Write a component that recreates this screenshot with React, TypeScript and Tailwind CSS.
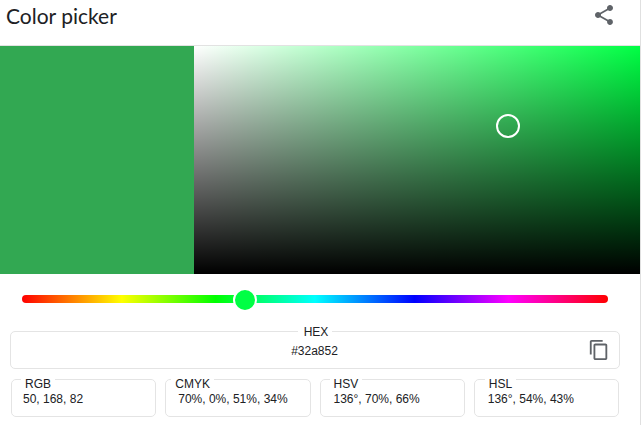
import React from "react";

const Field = ({ label, value, labelClass, valueClass }: { label: string; value: string; labelClass: string; valueClass: string }) => (
  <fieldset className="h-[45px] flex-1 min-w-0 rounded-[5px] border border-[#e4e4e4]">
    <legend className={`h-[14px] text-[12px] leading-[14px] px-[4px] text-[#202124] ${labelClass}`}>
      <span className="relative top-[5px]">{label}</span>
    </legend>
    <div className={`text-[12px] leading-[14px] text-[#202124] mt-[6px] ${valueClass}`}>{value}</div>
  </fieldset>
);

export default function App() {
  return (
    <div className="w-[641px] h-[425px] bg-white overflow-hidden border-r border-[#e0e0e0]" style={{ fontFamily: '"Liberation Sans", Arial, sans-serif' }}>
      <header className="h-[46px] flex items-start justify-between border-b border-[#e2e2e2] pl-[6px] pr-[24px]">
        <h1 className="text-[21px] leading-[32px] text-[#202124]" style={{ fontFamily: 'Lato, sans-serif' }}>Color picker</h1>
        <svg width="24" height="24" viewBox="0 0 24 24" className="mt-[3px]" fill="#5f6368">
          <path d="M18 16.08c-.76 0-1.44.3-1.96.77L8.91 12.7c.05-.23.09-.46.09-.7s-.04-.47-.09-.7l7.05-4.11c.54.5 1.25.81 2.04.81 1.66 0 3-1.34 3-3s-1.34-3-3-3-3 1.34-3 3c0 .24.04.47.09.7L8.04 9.81C7.5 9.31 6.79 9 6 9c-1.66 0-3 1.34-3 3s1.34 3 3 3c.79 0 1.5-.31 2.04-.81l7.12 4.16c-.05.21-.08.43-.08.65 0 1.61 1.31 2.92 2.92 2.92s2.92-1.31 2.92-2.92-1.31-2.92-2.92-2.92z" />
        </svg>
      </header>

      <section className="flex h-[228px]">
        <div className="w-[194px] bg-[#32a852]" />
        <div className="relative flex-1 bg-[#00ff44]">
          <div className="absolute inset-0 bg-gradient-to-r from-white to-transparent" />
          <div className="absolute inset-0 bg-gradient-to-b from-transparent to-black" />
          <div className="absolute left-[302px] top-[68px] w-[24px] h-[24px] rounded-full border-2 border-white" />
        </div>
      </section>

      <div className="relative mt-[21px] ml-[22px] w-[586px] h-[8px] rounded-full bg-[linear-gradient(to_right,#f00_0%,#ff0_17%,#0f0_33%,#0ff_50%,#00f_67%,#f0f_83%,#f00_100%)]">
        <div className="absolute left-[211px] top-[-7px] w-[24px] h-[24px] rounded-full bg-[#00ff44] border-2 border-white" />
      </div>

      <fieldset className="relative mt-[21px] ml-[10px] w-[610px] h-[45px] rounded-[5px] border border-[#e4e4e4] text-center">
        <legend className="mx-auto h-[14px] text-[12px] leading-[14px] px-[5px] text-[#202124]">
          <span className="relative top-[1px] left-[1px]">HEX</span>
        </legend>
        <div className="text-[12px] leading-[14px] text-[#202124] mt-[6px] pr-[1px]">#32a852</div>
        <svg width="22" height="22" viewBox="0 0 24 24" fill="#5f6368" className="absolute right-[9px] top-[1px]">
          <path d="M16 1H4c-1.1 0-2 .9-2 2v14h2V3h12V1zm3 4H8c-1.1 0-2 .9-2 2v14c0 1.1.9 2 2 2h11c1.1 0 2-.9 2-2V7c0-1.1-.9-2-2-2zm0 16H8V7h11v14z" />
        </svg>
      </fieldset>

      <div className="mt-[3px] ml-[11px] w-[608px] flex gap-[9px]">
        <Field label="RGB" value="50, 168, 82" labelClass="ml-[9px]" valueClass="pl-[11px]" />
        <Field label="CMYK" value="70%, 0%, 51%, 34%" labelClass="ml-[5px]" valueClass="pl-[12px]" />
        <Field label="HSV" value="136°, 70%, 66%" labelClass="ml-[9px]" valueClass="pl-[13px]" />
        <Field label="HSL" value="136°, 54%, 43%" labelClass="ml-[10px]" valueClass="pl-[13px]" />
      </div>
    </div>
  );
}
